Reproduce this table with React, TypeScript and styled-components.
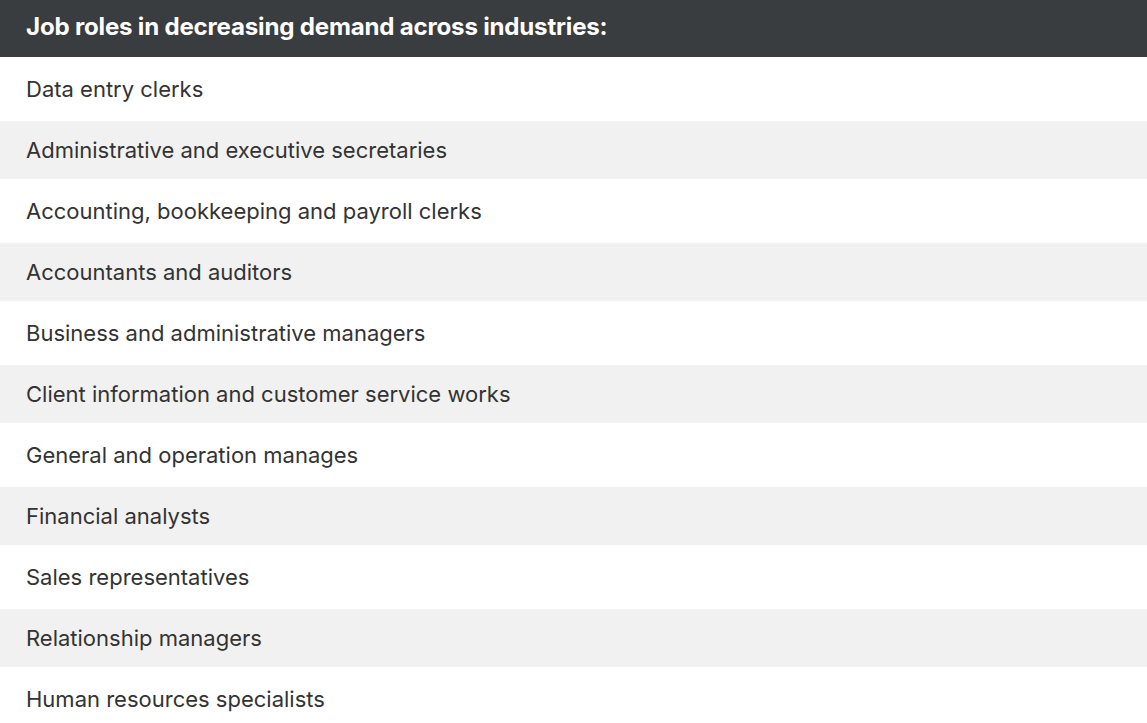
import styled, { createGlobalStyle } from "styled-components";

const GlobalStyle = createGlobalStyle`
    html, body {
        margin: 0;
        padding: 0;
        background: #ffffff;
    }
`;

const StyledTable = styled.div`
    display: flex;
    flex-direction: column;
    width: 1147px;
    font-family: Inter, "Liberation Sans", sans-serif;
`;

const StyledHeader = styled.div`
    display: flex;
    align-items: center;
    height: 53px;
    padding: 0 26px 4px;
    background-color: #3a3d40;
    color: #ffffff;
    font-size: 24.1px;
    font-weight: 700;
    letter-spacing: -0.2px;
`;

const StyledRow = styled.div<{ $shaded: boolean }>`
    display: flex;
    align-items: center;
    height: 58px;
    padding: 0 26px;
    border-top: 3px solid #ffffff;
    background-color: ${(p) => (p.$shaded ? "#f1f1f1" : "#ffffff")};
    color: #333333;
    font-size: 22px;
    font-weight: 400;
`;

const roles = [
    "Data entry clerks",
    "Administrative and executive secretaries",
    "Accounting, bookkeeping and payroll clerks",
    "Accountants and auditors",
    "Business and administrative managers",
    "Client information and customer service works",
    "General and operation manages",
    "Financial analysts",
    "Sales representatives",
    "Relationship managers",
    "Human resources specialists",
];

export default function App() {
    return (
        <>
            <GlobalStyle />
            <StyledTable>
                <StyledHeader>Job roles in decreasing demand across industries:</StyledHeader>
                {roles.map((role, i) => (
                    <StyledRow key={role} $shaded={i % 2 === 1}>
                        {role}
                    </StyledRow>
                ))}
            </StyledTable>
        </>
    );
}
